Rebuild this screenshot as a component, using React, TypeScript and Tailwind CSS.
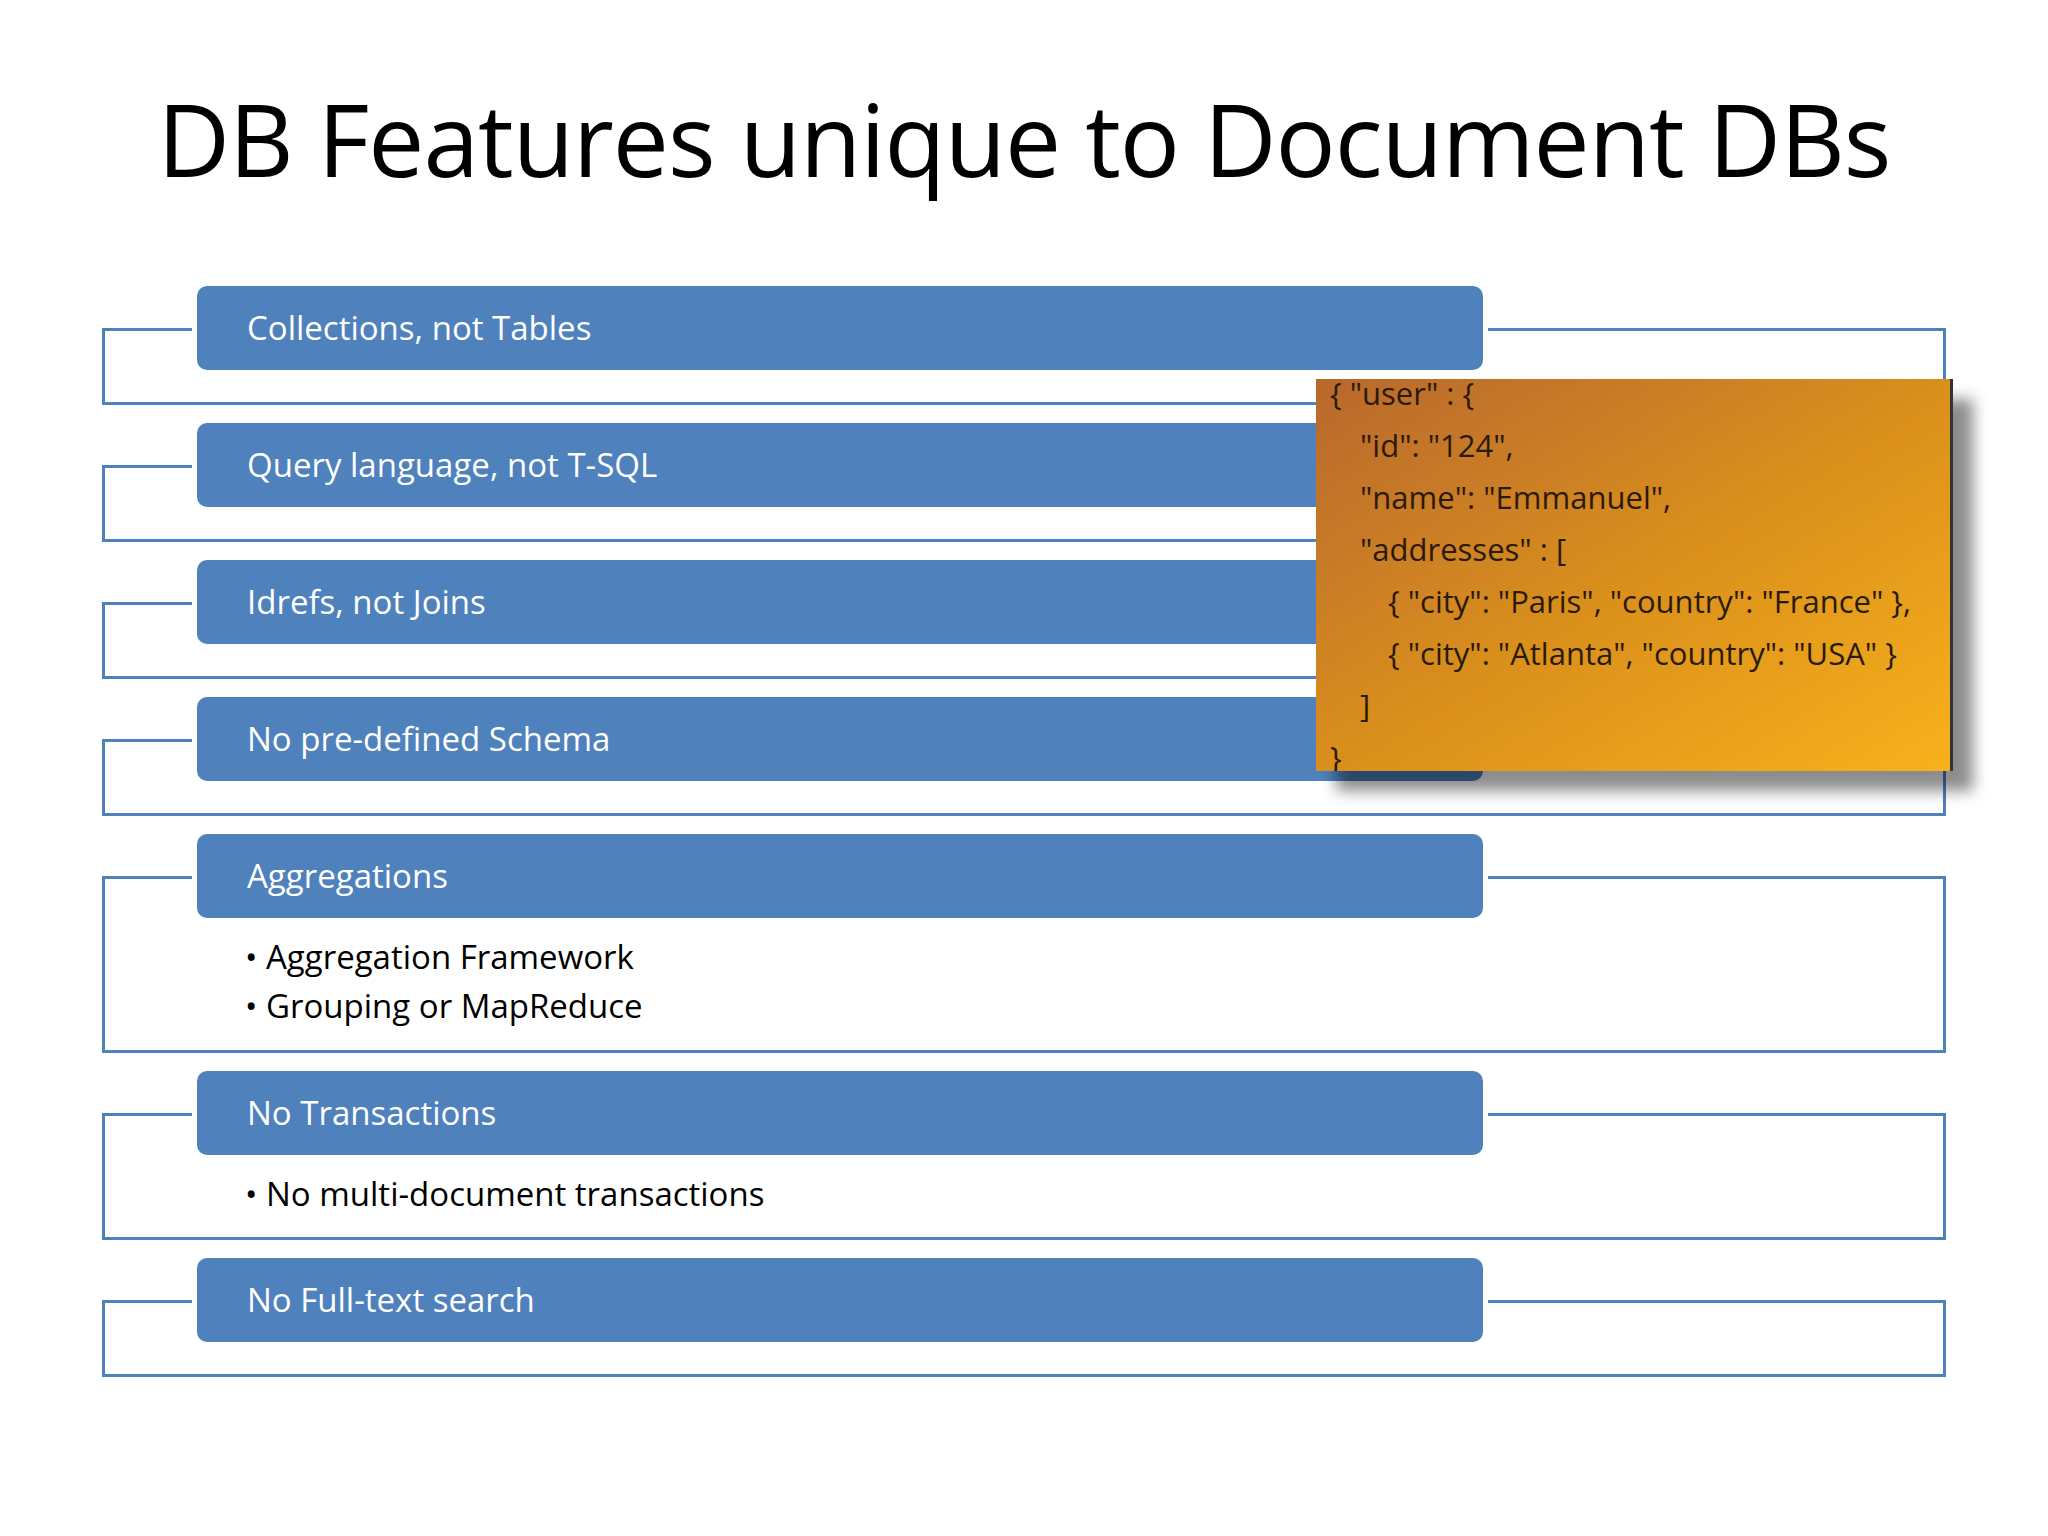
import React from "react";

const font = { fontFamily: '"Open Sans", "Liberation Sans", sans-serif' };

function Row({ title, h, bullets }: { title: string; h: string; bullets?: string[] }) {
  return (
    <div className={`mt-[60px] border-[3px] border-[#4f81bd] ${h}`}>
      <div className="-mt-[45px] ml-[92px] w-[1286px] h-[84px] rounded-[10px] bg-[#4f81bd] ring-[5px] ring-white flex items-center pl-[50px] text-white text-[33px]">
        {title}
      </div>
      {bullets && (
        <div className="pl-[140px] pt-[14px] text-[33px] leading-[49px] text-black">
          {bullets.map((b) => (
            <div key={b}>• {b}</div>
          ))}
        </div>
      )}
    </div>
  );
}

export default function App() {
  const lines: [number, string][] = [
    [0, '{ "user" : {'],
    [1, '"id": "124",'],
    [1, '"name": "Emmanuel",'],
    [1, '"addresses" : ['],
    [2, '{ "city": "Paris", "country": "France" },'],
    [2, '{ "city": "Atlanta", "country": "USA" }'],
    [1, "]"],
    [0, "}"],
  ];
  return (
    <div className="relative w-[2048px] h-[1536px] bg-white overflow-hidden" style={font}>
      <div className="pt-[78px] text-center text-[100px] leading-[120px] text-black tracking-[-1px]">
        DB Features unique to Document DBs
      </div>
      <div className="ml-[102px] w-[1844px] pt-[70px]">
        <Row title="Collections, not Tables" h="h-[77px]" />
        <Row title="Query language, not T-SQL" h="h-[77px]" />
        <Row title="Idrefs, not Joins" h="h-[77px]" />
        <Row title="No pre-defined Schema" h="h-[77px]" />
        <Row title="Aggregations" h="h-[177px]" bullets={["Aggregation Framework", "Grouping or MapReduce"]} />
        <Row title="No Transactions" h="h-[127px]" bullets={["No multi-document transactions"]} />
        <Row title="No Full-text search" h="h-[77px]" />
      </div>
      <div className="absolute left-[1316px] top-[379px] w-[637px] h-[392px] overflow-hidden bg-gradient-to-br from-[#b8682c] via-[#d98f1b] to-[#f8b11c] border-r-[3px] border-[#333] pl-[14px] text-[#2a1a08] text-[31px] leading-[52px] shadow-[20px_20px_14px_rgba(0,0,0,0.45)]">
        <div className="-mt-[12px]">
          {lines.map(([ind, t], i) => (
            <div key={i} className={ind === 0 ? "" : ind === 1 ? "pl-[30px]" : "pl-[58px]"} style={{ whiteSpace: "pre" }}>
              {t}
            </div>
          ))}
        </div>
      </div>
    </div>
  );
}
